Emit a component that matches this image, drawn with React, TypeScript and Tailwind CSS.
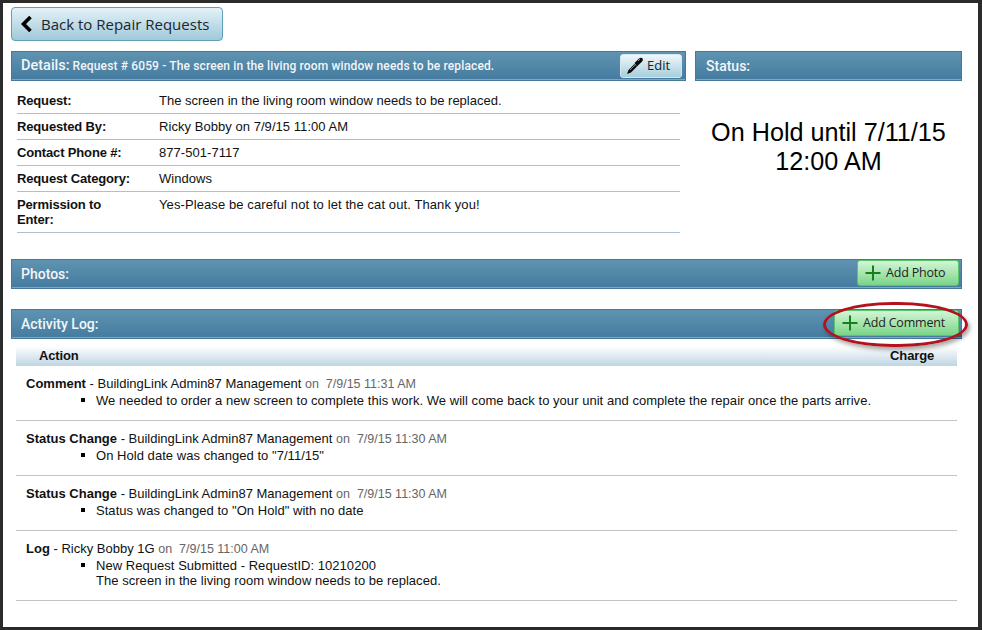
const bar = "flex border border-[#44799a] bg-gradient-to-b from-[#5f93b1] to-[#447b9f] shadow-[inset_0_-1px_0_#7fa8c0] font-['Roboto',sans-serif] font-medium text-[#f1f6f9]"

function Plus() {
  return (
    <svg width="16" height="16" viewBox="0 0 16 16" aria-hidden="true">
      <path d="M8 0.5v15M0.5 8h15" stroke="#16801f" strokeWidth="2" fill="none" />
    </svg>
  )
}

function Pen() {
  return (
    <svg width="18" height="18" viewBox="0 0 18 18" aria-hidden="true">
      <path d="M1 17l1.5-4 6-6 2.5 2.5-6 6z" fill="#0c0c0c" />
      <path d="M8.5 6l4.5-4.5c1.2-1 3-1 3.6 0s.2 2.5-1 3.6L11 9.5z" fill="#0c0c0c" />
      <path d="M4 13l5.5-5.5M12 4l2-2" stroke="#8a8a8a" strokeWidth="1" fill="none" />
    </svg>
  )
}

function GreenButton({ label, className }: { label: string; className: string }) {
  return (
    <button className={`flex h-[26px] items-center gap-[5px] rounded-[3px] border border-[#58c46b] bg-gradient-to-b from-[#d2f5d5] to-[#79d588] pl-[7px] font-['Open_Sans',sans-serif] text-[12.5px] tracking-[-0.2px] text-[#222] ${className}`}>
      <Plus />
      {label}
    </button>
  )
}

const details = [
  ["Request:", "The screen in the living room window needs to be replaced."],
  ["Requested By:", "Ricky Bobby on 7/9/15 11:00 AM"],
  ["Contact Phone #:", "877-501-7117"],
  ["Request Category:", "Windows"],
]

const logs = [
  { kind: "Comment", who: "BuildingLink Admin87 Management", when: "7/9/15 11:31 AM", lines: ["We needed to order a new screen to complete this work. We will come back to your unit and complete the repair once the parts arrive."] },
  { kind: "Status Change", who: "BuildingLink Admin87 Management", when: "7/9/15 11:30 AM", lines: ['On Hold date was changed to "7/11/15"'] },
  { kind: "Status Change", who: "BuildingLink Admin87 Management", when: "7/9/15 11:30 AM", lines: ['Status was changed to "On Hold" with no date'] },
  { kind: "Log", who: "Ricky Bobby 1G", when: "7/9/15 11:00 AM", lines: ["New Request Submitted - RequestID: 10210200", "The screen in the living room window needs to be replaced."] },
]

export default function App() {
  return (
    <div className="relative h-[630px] w-[982px] overflow-hidden border-b-[3px] border-l-[3px] border-r-[4px] border-t-[3px] border-[#2b2b2b] bg-white font-['Liberation_Sans',sans-serif] text-[13px] text-[#111]">
      <div className="pl-[8px] pr-[16px] pt-[4px]">
        <button className="flex h-[34px] w-[212px] items-center gap-[8px] rounded-[4px] border border-[#5f9fb8] bg-gradient-to-b from-[#e4f2f7] to-[#a0c9d9] pl-[8px] font-['Open_Sans',sans-serif] text-[15px] text-[#1c2530]">
          <svg width="13" height="18" viewBox="0 0 13 18" aria-hidden="true">
            <path d="M10.5 2L3.5 9l7 7" stroke="#000" strokeWidth="3.6" fill="none" />
          </svg>
          Back to Repair Requests
        </button>

        <div className="mt-[10px] flex gap-[9px]">
          <div className="w-[675px]">
            <div className={`${bar} h-[30px] items-center justify-between pl-[9px] pr-[3px]`}>
              <div className="flex items-baseline gap-[3px]">
                <span className="text-[14.5px]">Details:</span>
                <span className="text-[12px] tracking-[0.14px]">Request # 6059 - The screen in the living room window needs to be replaced.</span>
              </div>
              <button className="flex h-[24px] w-[62px] items-center gap-[3px] rounded-[3px] border border-[#d6e8ef] bg-gradient-to-b from-[#eef7fa] to-[#a6cedc] pl-[5px] font-['Open_Sans',sans-serif] text-[13px] font-normal text-[#222]">
                <Pen />
                Edit
              </button>
            </div>
            <div className="ml-[6px] w-[663px] pt-[7px]">
              {details.map(([label, value], i) => (
                <div key={label} className="flex h-[26px] border-b border-[#aebfd0] pt-[5px] leading-[15px]">
                  <div className="w-[142px] font-bold tracking-[-0.15px]">{label}</div>
                  <div className={i === 0 ? "" : "tracking-[0.05px]"}>{value}</div>
                </div>
              ))}
              <div className="flex h-[41px] border-b border-[#aebfd0] pt-[5px] leading-[15px]">
                <div className="w-[142px] pr-[30px] font-bold tracking-[-0.15px]">Permission to Enter:</div>
                <div className="tracking-[0.1px]">Yes-Please be careful not to let the cat out. Thank you!</div>
              </div>
            </div>
          </div>

          <div className="w-[267px]">
            <div className={`${bar} h-[30px] items-center pl-[10px] text-[14px]`}>Status:</div>
            <div className="pt-[37px] text-center text-[25.2px] leading-[29px] text-black">
              On Hold until 7/11/15
              <br />
              12:00 AM
            </div>
          </div>
        </div>

        <div className={`${bar} mt-[26px] h-[30px] w-[951px] justify-between pl-[9px] pr-[2px] text-[14px]`}>
          <span className="self-center">Photos:</span>
          <GreenButton label="Add Photo" className="w-[102px]" />
        </div>

        <div className={`${bar} mt-[20px] h-[30px] w-[951px] justify-between pl-[9px] pr-[2px] text-[14px]`}>
          <span className="self-center">Activity Log:</span>
          <GreenButton label="Add Comment" className="w-[125px]" />
        </div>

        <div className="ml-[5px] w-[941px]">
          <div className="mt-[7px] flex h-[20px] items-center justify-between bg-gradient-to-b from-white to-[#bfd5e3] px-[23px] font-bold tracking-[-0.15px]">
            <span>Action</span>
            <span>Charge</span>
          </div>
          {logs.map((log, i) => (
            <div key={i} className="border-b border-[#c4c4c4] pb-[12px] pl-[10px] pt-[10px]">
              <div className="leading-[15px]">
                <b>{log.kind}</b> - {log.who} <span className="text-[12.5px] text-[#666]">on &nbsp;{log.when}</span>
              </div>
              <ul className="list-none pl-[70px]">
                <li className="relative pt-[1px] leading-[15px] tracking-[0.04px]">
                  <span className="absolute left-[-15px] top-[6px] h-[4px] w-[4px] bg-black" />
                  {log.lines.map((line) => (
                    <div key={line}>{line}</div>
                  ))}
                </li>
              </ul>
            </div>
          ))}
        </div>
      </div>

      <div className="absolute left-[820px] top-[299px] h-[45px] w-[145px] rounded-[48%/50%] border-[3px] border-[#b3121d] shadow-[2px_3px_4px_rgba(0,0,0,0.35)]" />
    </div>
  )
}
